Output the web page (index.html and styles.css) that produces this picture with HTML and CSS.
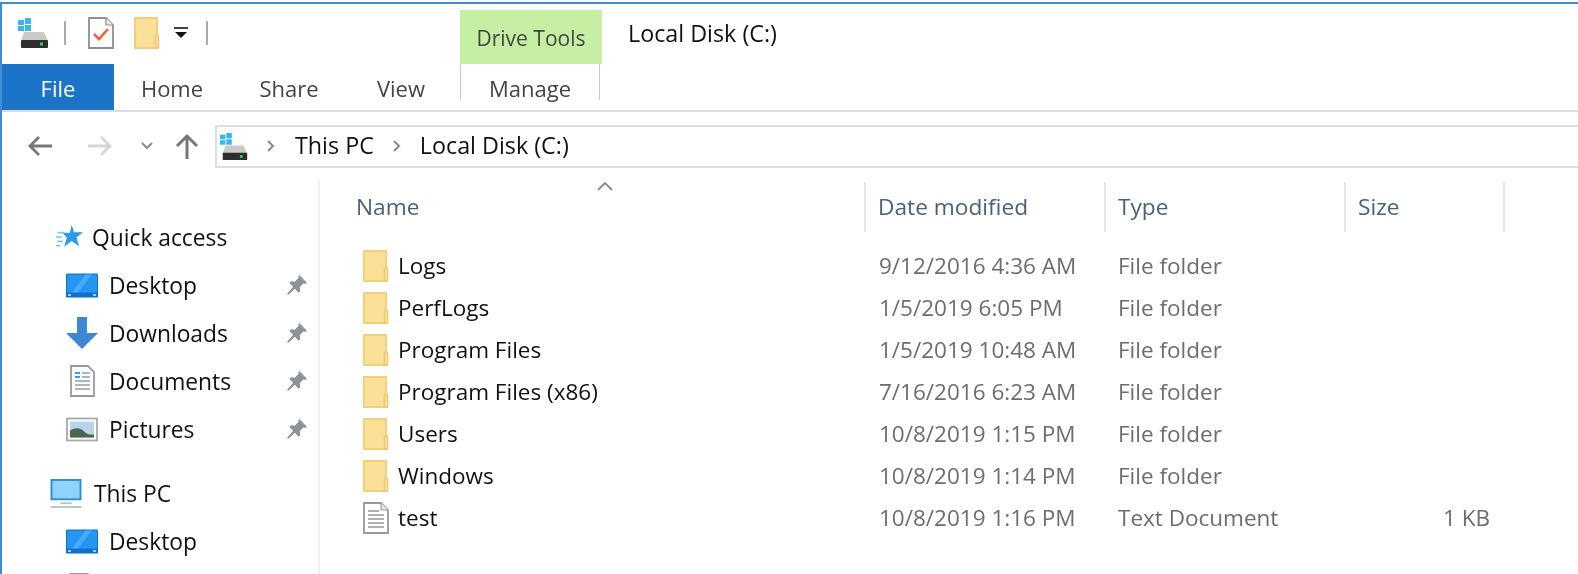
FILE: index.html
```html
<!DOCTYPE html>
<html lang="en">
<head>
    <meta charset="UTF-8">
    <title>Local Disk (C:)</title>
    <link rel="stylesheet" href="styles.css">
</head>
<body>
    <svg class="defs" width="0" height="0">
        <symbol id="drive" viewBox="0 0 32 32">
            <g fill="#35b6ee"><rect x="0" y="3" width="6" height="5"/><rect x="7" y="1" width="6" height="6"/><rect x="0" y="9" width="6" height="5"/><rect x="7" y="8" width="6" height="6"/></g>
            <path d="M6 15h20l4 9H3z" fill="#c9cbcb"/>
            <rect x="3" y="23" width="27" height="8" rx="1" fill="#2e2e2e"/>
            <rect x="22" y="25.500" width="3" height="3" fill="#36d04a"/>
        </symbol>
        <symbol id="folder" viewBox="0 0 26 32">
            <path d="M1 1h22v30H1z" fill="#fbe097" stroke="#f2cf78" stroke-width="2"/>
            <path d="M21.500 20q0-2 1.500-2t1.500 2v11h-3z" fill="#fde8ad" stroke="#efc86c" stroke-width="1.600"/>
        </symbol>
        <symbol id="textfile" viewBox="0 0 26 32">
            <path d="M1 1h17l7 7v23H1z" fill="#fff" stroke="#9a9a9a" stroke-width="1.800"/>
            <path d="M18 1v7h7" fill="#e8e8e8" stroke="#9a9a9a" stroke-width="1.200"/>
            <path d="M5 9h11M5 13h16M5 17h16M5 21h16M5 25h16" stroke="#b0b0b0" stroke-width="2"/>
        </symbol>
        <symbol id="monitor" viewBox="0 0 32 24">
            <rect width="32" height="24" rx="1" fill="#0f6fcb"/>
            <rect x="1" y="1" width="30" height="18" fill="#2497f2"/>
            <path d="M6 19 20 1h6L12 19z" fill="#49abf6"/>
            <path d="M2 21.500h3M27 21.500h3" stroke="#d5e9fb" stroke-width="1.600"/>
        </symbol>
        <symbol id="pin" viewBox="0 0 20 20">
            <path d="M12 1l7 7-2 1-1-.5-3.500 3.500.5 3.500-1.500 1.500-3.500-3.500L2 19l-1-1 5.500-6.500L3 8l1.500-1.500L8 7l3.500-3.500L11 2.500z" fill="#8b9298"/>
        </symbol>
    </svg>

    <div class="window">
        <div class="titlebar">
            <div class="qat">
                <svg class="qat-drive"><use href="#drive"/></svg>
                <span class="qat-sep"></span>
                <svg class="qat-check" viewBox="0 0 26 32">
                    <path d="M1 1h17l7 7v23H1z" fill="#fff" stroke="#8f8f8f" stroke-width="1.800"/>
                    <path d="M18 1v7h7" fill="#eee" stroke="#8f8f8f" stroke-width="1.200"/>
                    <path d="M6 17l5 5 9-10" fill="none" stroke="#e8643c" stroke-width="2.600"/>
                </svg>
                <svg class="qat-folder"><use href="#folder"/></svg>
                <svg class="qat-more" viewBox="0 0 14 12">
                    <path d="M0 1h14" stroke="#111" stroke-width="1.600"/>
                    <path d="M1 5h12l-6 6z" fill="#111"/>
                </svg>
                <span class="qat-sep"></span>
            </div>
            <div class="tool-group">Drive Tools</div>
            <div class="window-title">Local Disk (C:)</div>
        </div>

        <div class="tabs">
            <div class="tab file-tab">File</div>
            <div class="tab tab-home">Home</div>
            <div class="tab tab-share">Share</div>
            <div class="tab tab-view">View</div>
            <div class="tab tab-manage">Manage</div>
        </div>

        <div class="navbar">
            <svg class="nav-back" viewBox="0 0 26 22"><path d="M25 11H3M12 2l-9 9 9 9" fill="none" stroke="#777" stroke-width="2.800"/></svg>
            <svg class="nav-forward" viewBox="0 0 26 22"><path d="M1 11h22M14 2l9 9-9 9" fill="none" stroke="#d6d6d6" stroke-width="2.800"/></svg>
            <svg class="nav-recent" viewBox="0 0 12 8"><path d="M1 1l5 5 5-5" fill="none" stroke="#888" stroke-width="2"/></svg>
            <svg class="nav-up" viewBox="0 0 24 26"><path d="M12 26V3M2 13 12 3l10 10" fill="none" stroke="#777" stroke-width="3"/></svg>
            <div class="address">
                <svg class="address-drive"><use href="#drive"/></svg>
                <svg class="crumb-arrow" viewBox="0 0 8 12"><path d="M1 1l5 5-5 5" fill="none" stroke="#888" stroke-width="2"/></svg>
                <span class="crumb crumb-pc">This PC</span>
                <svg class="crumb-arrow second" viewBox="0 0 8 12"><path d="M1 1l5 5-5 5" fill="none" stroke="#888" stroke-width="2"/></svg>
                <span class="crumb">Local Disk (C:)</span>
            </div>
        </div>

        <div class="content">
            <div class="sidebar">
                <div class="side-row top quick">
                    <svg class="side-icon star" viewBox="0 0 32 28">
                        <path d="M19 0l2.800 8.500H32l-7.500 6 3 10-8.500-6-8.500 6.500 3-10.500-5.500-5.500h9z" fill="#2e9be6"/>
                        <path d="M3 9h7M1 14h7M3 19h6M1 24h5" stroke="#7cc4f2" stroke-width="1.800"/>
                    </svg>
                    <span>Quick access</span>
                </div>
                <div class="side-row">
                    <svg class="side-icon"><use href="#monitor"/></svg>
                    <span>Desktop</span>
                    <svg class="pin"><use href="#pin"/></svg>
                </div>
                <div class="side-row">
                    <svg class="side-icon tall" viewBox="0 0 32 32"><path d="M11 0h10v16h11L16 32 0 16h11z" fill="#3c87d6"/></svg>
                    <span>Downloads</span>
                    <svg class="pin"><use href="#pin"/></svg>
                </div>
                <div class="side-row">
                    <svg class="side-icon tall" viewBox="0 0 32 32">
                        <path d="M5 1h17l6 6v24H5z" fill="#fff" stroke="#9a9a9a" stroke-width="1.800"/>
                        <path d="M9 8h5M9 12h5" stroke="#3c9be0" stroke-width="2"/>
                        <path d="M16 8h8M16 12h8M9 16h15M9 20h15M9 24h15" stroke="#a9b6c0" stroke-width="1.800"/>
                    </svg>
                    <span>Documents</span>
                    <svg class="pin"><use href="#pin"/></svg>
                </div>
                <div class="side-row">
                    <svg class="side-icon" viewBox="0 0 32 24">
                        <rect x="1" y="1" width="30" height="22" fill="#fff" stroke="#a8a8a8" stroke-width="1.800"/>
                        <rect x="4" y="4" width="24" height="16" fill="#b9d3e8"/>
                        <path d="M4 13c6-3 10-3 14 1s7 3 10 3v3H4z" fill="#49674f"/>
                    </svg>
                    <span>Pictures</span>
                    <svg class="pin"><use href="#pin"/></svg>
                </div>
                <div class="side-row top pc">
                    <svg class="side-icon big" viewBox="0 0 32 30">
                        <rect x="1" y="1" width="30" height="20" fill="#8fd3fa" stroke="#2d8fc9" stroke-width="2"/>
                        <path d="M10 25h12" stroke="#b8c6d0" stroke-width="2"/>
                        <path d="M0 29h32" stroke="#b8c6d0" stroke-width="2"/>
                    </svg>
                    <span>This PC</span>
                </div>
                <div class="side-row">
                    <svg class="side-icon"><use href="#monitor"/></svg>
                    <span>Desktop</span>
                </div>
                <div class="side-row">
                    <svg class="side-icon tall" viewBox="0 0 32 32"><path d="M5 1h17l6 6v24H5z" fill="#fff" stroke="#9a9a9a" stroke-width="1.800"/></svg>
                </div>
            </div>

            <div class="files">
                <div class="file-head">
                    <div class="col-name">Name<svg class="sort" viewBox="0 0 16 9"><path d="M1 8l7-7 7 7" fill="none" stroke="#8a8a8a" stroke-width="1.800"/></svg></div>
                    <div class="col">Date modified</div>
                    <div class="col">Type</div>
                    <div class="col">Size</div>
                </div>

                <div class="file-row">
                    <div class="file-name"><svg class="file-icon"><use href="#folder"/></svg>Logs</div>
                    <div>9/12/2016 4:36 AM</div><div>File folder</div><div></div>
                </div>
                <div class="file-row">
                    <div class="file-name"><svg class="file-icon"><use href="#folder"/></svg>PerfLogs</div>
                    <div>1/5/2019 6:05 PM</div><div>File folder</div><div></div>
                </div>
                <div class="file-row">
                    <div class="file-name"><svg class="file-icon"><use href="#folder"/></svg>Program Files</div>
                    <div>1/5/2019 10:48 AM</div><div>File folder</div><div></div>
                </div>
                <div class="file-row">
                    <div class="file-name"><svg class="file-icon"><use href="#folder"/></svg>Program Files (x86)</div>
                    <div>7/16/2016 6:23 AM</div><div>File folder</div><div></div>
                </div>
                <div class="file-row">
                    <div class="file-name"><svg class="file-icon"><use href="#folder"/></svg>Users</div>
                    <div>10/8/2019 1:15 PM</div><div>File folder</div><div></div>
                </div>
                <div class="file-row">
                    <div class="file-name"><svg class="file-icon"><use href="#folder"/></svg>Windows</div>
                    <div>10/8/2019 1:14 PM</div><div>File folder</div><div></div>
                </div>
                <div class="file-row">
                    <div class="file-name"><svg class="file-icon"><use href="#textfile"/></svg>test</div>
                    <div>10/8/2019 1:16 PM</div><div>Text Document</div><div class="file-size">1 KB</div>
                </div>
            </div>
        </div>
    </div>
</body>
</html>
```

FILE: styles.css
```css
html, body {
    margin: 0;
    height: 100%;
    overflow: hidden;
    background: #fff;
}

body {
    font-family: "Open Sans", "Noto Sans", sans-serif;
    font-size: 22.5px;
    color: #1a1a1a;
}

.defs {
    display: block;
    height: 0;
}

/* the reference is a soft, upscaled capture */
.window {
    height: 572px;
    margin-top: 2px;
    border-top: 2px solid #3a8fd6;
    border-left: 2px solid #3a8fd6;
    overflow: hidden;
    box-sizing: border-box;
    filter: blur(0.4px);
}

/* title row */
.titlebar {
    display: flex;
    height: 60px;
}

.qat {
    display: flex;
    align-items: center;
    width: 458px;
    height: 58px;
    padding-left: 16px;
    box-sizing: border-box;
}

.qat-drive {
    width: 32px;
    height: 32px;
}

.qat-sep {
    width: 2px;
    height: 24px;
    background: #aaa;
}

.qat-drive + .qat-sep {
    margin-left: 14px;
}

.qat-check {
    width: 26px;
    height: 32px;
    margin-left: 22px;
}

.qat-folder {
    width: 26px;
    height: 32px;
    margin-left: 20px;
}

.qat-more {
    width: 14px;
    height: 12px;
    margin-left: 14px;
}

.qat-more + .qat-sep {
    margin-left: 18px;
}

.tool-group {
    width: 142px;
    height: 54px;
    margin-top: 6px;
    padding-top: 14px;
    box-sizing: border-box;
    background: #c6efa3;
    color: #444;
    font-size: 21px;
    text-align: center;
}

.window-title {
    margin-left: 26px;
    padding-top: 13px;
    color: #111;
    font-size: 23.3px;
}

/* ribbon tabs */
.tabs {
    display: flex;
    height: 46px;
    border-bottom: 2px solid #dcdcdc;
    font-size: 22px;
}

.tab {
    height: 46px;
    line-height: 49px;
    text-align: center;
    color: #444;
}

.file-tab {
    width: 112px;
    background: #1c74c8;
    color: #fff;
}

.tab-home { width: 116px; }
.tab-share { width: 118px; }

.tab-view {
    width: 106px;
    margin-right: 6px;
}

.tab-manage {
    width: 138px;
    height: 36px;
    border-left: 1px solid #c8c8c8;
    border-right: 1px solid #c8c8c8;
}

/* address row */
.navbar {
    display: flex;
    align-items: center;
    height: 68px;
}

.nav-back {
    width: 26px;
    height: 22px;
    margin-left: 25px;
}

.nav-forward {
    width: 26px;
    height: 22px;
    margin-left: 34px;
}

.nav-recent {
    width: 12px;
    height: 8px;
    margin-left: 28px;
}

.nav-up {
    width: 24px;
    height: 26px;
    margin-left: 22px;
}

.address {
    display: flex;
    align-items: center;
    flex: 1;
    height: 43px;
    margin-left: 16px;
    border: 2px solid #dedede;
    border-right: none;
    box-sizing: border-box;
    font-size: 23.3px;
}

.address-drive {
    width: 29px;
    height: 29px;
    margin-left: 3px;
}

.crumb-arrow {
    width: 8px;
    height: 12px;
    margin-left: 18px;
}

.crumb-arrow.second {
    margin-left: 19px;
}

.crumb {
    margin-left: 19px;
    padding-bottom: 3px;
    color: #111;
}

.crumb-pc {
    margin-left: 20px;
}

/* sidebar and list */
.content {
    display: flex;
}

.sidebar {
    width: 318px;
    height: 394px;
    padding-top: 33px;
    border-right: 2px solid #f0f0f0;
    box-sizing: border-box;
    overflow: hidden;
    flex-shrink: 0;
    font-size: 22.8px;
}

.side-row {
    display: flex;
    align-items: center;
    height: 48px;
    padding-left: 64px;
}

.side-row.top {
    padding-left: 48px;
}

.side-row.quick {
    padding-left: 53px;
}

.side-row.pc {
    margin-top: 16px;
}

.side-row span {
    margin-left: 11px;
    color: #111;
}

.side-row.quick span {
    margin-left: 9px;
}

.side-row.pc span {
    margin-left: 12px;
}

.side-icon {
    width: 32px;
    height: 25px;
}

.side-icon.tall {
    height: 32px;
}

.side-icon.big {
    height: 29px;
}

.side-icon.star {
    width: 28px;
    height: 26px;
}

.pin {
    width: 22px;
    height: 22px;
    margin-left: auto;
    margin-right: 10px;
}

.files {
    flex: 1;
}

.file-head,
.file-row {
    display: grid;
    grid-template-columns: 544px 240px 240px 161px;
}

.file-head {
    height: 50px;
    margin-top: 2px;
    margin-bottom: 13px;
    color: #4c607a;
    line-height: 50px;
    font-size: 22.7px;
}

.col-name {
    position: relative;
    padding-left: 36px;
}

.sort {
    position: absolute;
    left: 277px;
    top: 0;
    width: 16px;
    height: 9px;
}

.col {
    padding-left: 12px;
    border-left: 2px solid #e5e5e5;
}

.file-head .col:last-child {
    border-right: 2px solid #e5e5e5;
}

.file-row {
    height: 42px;
    line-height: 42px;
    color: #6d6d6d;
}

.file-row > div {
    padding-left: 14px;
}

.file-row > div:nth-child(2) {
    padding-left: 15px;
}

.file-row > .file-name {
    display: flex;
    align-items: center;
    padding-left: 43px;
    color: #111;
}

.file-row > .file-size {
    padding-left: 0;
    padding-right: 15px;
    text-align: right;
}

.file-icon {
    width: 26px;
    height: 32px;
    margin-right: 9px;
}
```
